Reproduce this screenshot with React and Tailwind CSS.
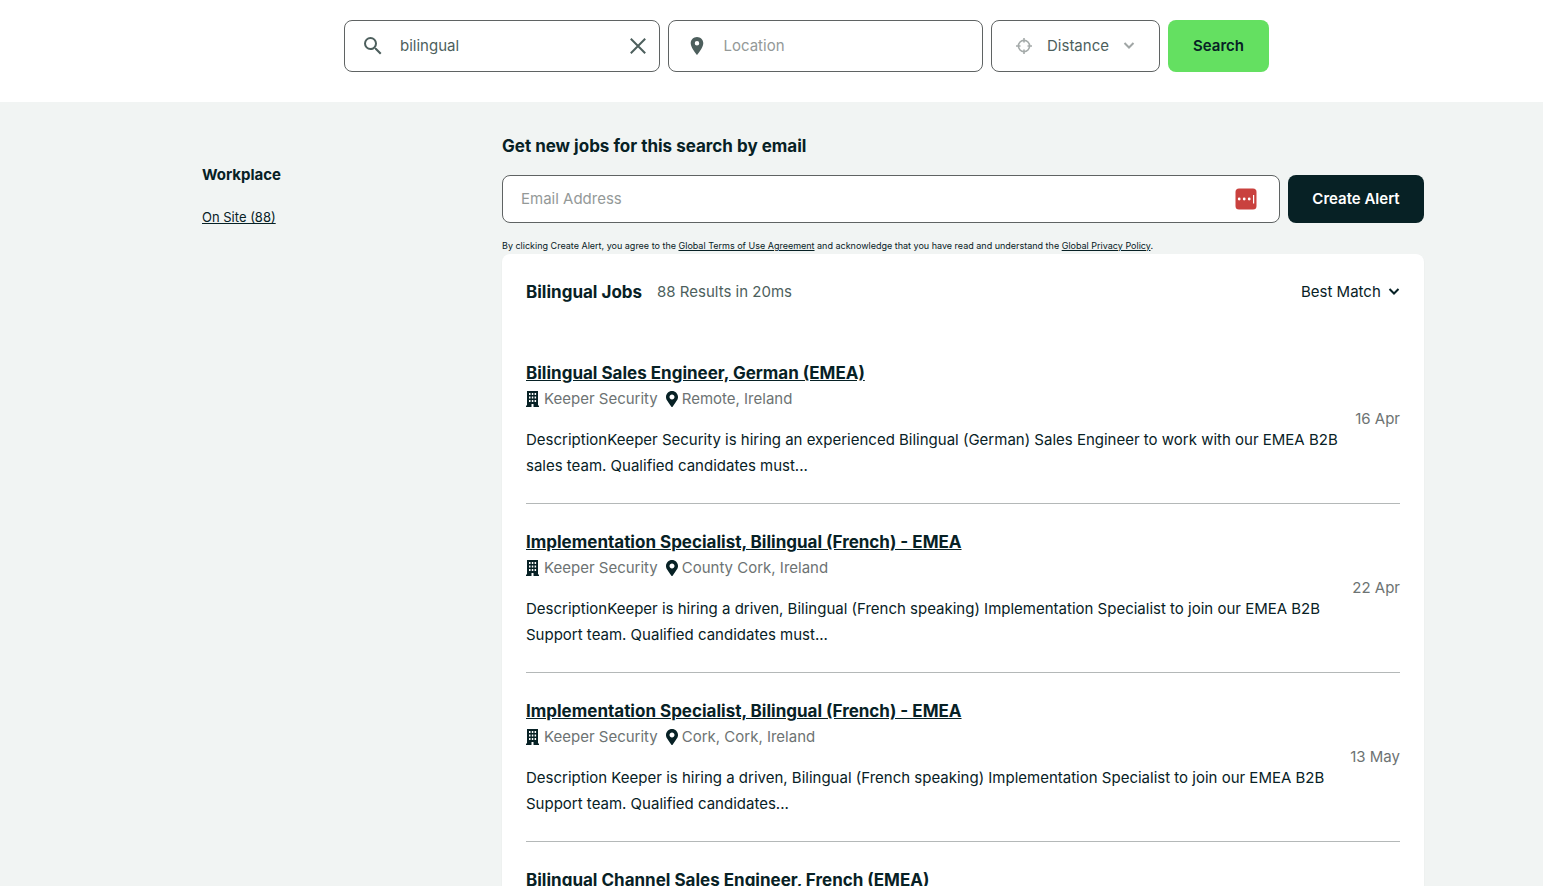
import React from "react";
import { MdSearch, MdPlace } from "react-icons/md";
import { FaMapMarkerAlt } from "react-icons/fa";

const jobs = [
  {
    title: "Bilingual Sales Engineer, German (EMEA)",
    company: "Keeper Security",
    location: "Remote, Ireland",
    date: "16 Apr",
    text: "DescriptionKeeper Security is hiring an experienced Bilingual (German) Sales Engineer to work with our EMEA B2B sales team. Qualified candidates must...",
  },
  {
    title: "Implementation Specialist, Bilingual (French) - EMEA",
    company: "Keeper Security",
    location: "County Cork, Ireland",
    date: "22 Apr",
    text: "DescriptionKeeper is hiring a driven, Bilingual (French speaking) Implementation Specialist to join our EMEA B2B Support team. Qualified candidates must...",
  },
  {
    title: "Implementation Specialist, Bilingual (French) - EMEA",
    company: "Keeper Security",
    location: "Cork, Cork, Ireland",
    date: "13 May",
    text: "Description Keeper is hiring a driven, Bilingual (French speaking) Implementation Specialist to join our EMEA B2B Support team. Qualified candidates...",
  },
];

const lastTitle = "Bilingual Channel Sales Engineer, French (EMEA)";

function Chevron({ className }) {
  return (
    <svg viewBox="0 0 12 12" className={className} fill="none" stroke="currentColor" strokeWidth="2" aria-hidden="true">
      <path d="M1.500 3 6 7.500 10.500 3" />
    </svg>
  );
}

function Crosshair() {
  return (
    <svg viewBox="0 0 16 16" className="size-4 shrink-0 text-[#a5abaa]" fill="none" stroke="currentColor" strokeWidth="1.600" aria-hidden="true">
      <circle cx="8" cy="8" r="5.600" />
      <path d="M8 0v4.500M8 11.500V16M0 8h4.500M11.500 8H16" />
    </svg>
  );
}

function Building() {
  return (
    <svg viewBox="0 0 14 16" className="h-4 w-[14px] shrink-0" aria-hidden="true">
      <path
        fill="currentColor"
        fillRule="evenodd"
        d="M1 0h11v14.500h1V16H7.500v-3h-2v3H0v-1.500h1ZM3 2v2h1.500V2Zm2.800 0v2h1.500V2Zm2.800 0v2h1.500V2ZM3 5.500v2h1.500v-2Zm2.800 0v2h1.500v-2Zm2.800 0v2h1.500v-2ZM3 9v2h1.500V9Zm2.800 0v2h1.500V9Zm2.800 0v2h1.500V9Z"
      />
    </svg>
  );
}

function SearchBar() {
  return (
    <header className="bg-white pt-5 pb-[30px] pl-[70px]">
      <form className="mx-auto flex h-[52px] max-w-[925px] gap-2" onSubmit={(e) => e.preventDefault()}>
        <div className="flex min-w-0 flex-1 items-center rounded-lg border border-[#5f6363] pr-3 pl-4">
          <MdSearch className="size-6 shrink-0 text-[#4d5f5d]" />
          <input aria-label="Keywords" defaultValue="bilingual" className="ml-[15px] min-w-0 flex-1 text-[#4d5f5d] outline-none" />
          <button type="button" aria-label="Clear keywords" className="text-[#4d5f5d]">
            <svg viewBox="0 0 18 18" className="size-[18px]" fill="none" stroke="currentColor" strokeWidth="2" aria-hidden="true">
              <path d="M1.800 1.800 16.200 16.200M16.200 1.800 1.800 16.200" />
            </svg>
          </button>
        </div>
        <div className="flex min-w-0 flex-1 items-center rounded-lg border border-[#5f6363] pr-3 pl-4">
          <MdPlace className="size-6 shrink-0 scale-90 text-[#4d5f5d]" />
          <input aria-label="Location" placeholder="Location" className="ml-[15px] min-w-0 flex-1 outline-none placeholder:text-[#949998]" />
        </div>
        <div className="flex w-[169px] items-center rounded-lg border border-[#5f6363] px-6">
          <Crosshair />
          <select aria-label="Distance" className="ml-[15px] min-w-0 flex-1 appearance-none bg-transparent text-[#4d5f5d] outline-none">
            <option>Distance</option>
          </select>
          <Chevron className="size-3 shrink-0 text-[#a0a6a5]" />
        </div>
        <button type="submit" className="w-[101px] rounded-lg bg-[#64e061] font-semibold text-[#072125]">
          Search
        </button>
      </form>
    </header>
  );
}

function AlertForm() {
  return (
    <form onSubmit={(e) => e.preventDefault()}>
      <h2 className="text-[17px] leading-7 font-bold">
        <label htmlFor="alert-email">Get new jobs for this search by email</label>
      </h2>
      <div className="mt-[15px] flex h-12 gap-2">
        <div className="flex min-w-0 flex-1 items-center rounded-lg border border-[#5f6363] bg-white pr-[22px] pl-[18px]">
          <input id="alert-email" type="email" placeholder="Email Address" className="min-w-0 flex-1 outline-none placeholder:text-[#949998]" />
          <svg viewBox="0 0 22 22" className="size-[22px] shrink-0" aria-hidden="true">
            <rect x="0.500" y="0.500" width="21" height="21" rx="3.500" fill="#c9413e" />
            <circle cx="4.200" cy="11" r="1.400" fill="#fff" />
            <circle cx="9.200" cy="11" r="1.400" fill="#fff" />
            <circle cx="14.200" cy="11" r="1.400" fill="#fff" />
            <rect x="18" y="7" width="1.200" height="8.500" fill="#fff" />
          </svg>
        </div>
        <button type="submit" className="w-[136px] rounded-lg bg-[#072125] font-semibold text-white">
          Create Alert
        </button>
      </div>
      <p className="pt-[15px] text-[9px] leading-4">
        By clicking Create Alert, you agree to the{" "}
        <a href="#terms" className="underline">Global Terms of Use Agreement</a> and acknowledge that you have read and
        understand the <a href="#privacy" className="underline">Global Privacy Policy</a>.
      </p>
    </form>
  );
}

function JobTitle({ children }) {
  return (
    <h3 className="text-[17px] leading-7 font-bold">
      <a href="#job" className="underline">{children}</a>
    </h3>
  );
}

function Job({ job }) {
  return (
    <li className="flex items-center justify-between gap-4 border-b border-[#b4b8b8] py-6">
      <div className="min-w-0">
        <JobTitle>{job.title}</JobTitle>
        <div className="flex items-center gap-2 leading-6 text-[#6d7373]">
          <span className="flex items-center gap-1">
            <span className="text-[#072125]"><Building /></span>
            {job.company}
          </span>
          <span className="flex items-center gap-1">
            <FaMapMarkerAlt className="h-4 w-3 text-[#072125]" />
            {job.location}
          </span>
        </div>
        <p className="mt-4 leading-[26px]">{job.text}</p>
      </div>
      <time className="shrink-0 text-[#6d7373]">{job.date}</time>
    </li>
  );
}

export default function App() {
  return (
    <div className="h-screen overflow-hidden bg-[#f1f4f3] font-['Inter',sans-serif] text-[15px] text-[#072125]">
      <SearchBar />
      <main className="pt-[30px] pl-[83px]">
        <div className="mx-auto flex max-w-[1222px]">
          <aside className="w-[300px] shrink-0 pt-[31px]">
            <h2 className="leading-6 font-bold">Workplace</h2>
            <a href="#on-site" className="mt-5 inline-block text-[13px] leading-5 underline">On Site (88)</a>
          </aside>
          <div className="min-w-0 flex-1">
            <AlertForm />
            <section className="rounded-lg bg-white p-6 shadow-xs">
              <div className="flex items-center">
                <h1 className="text-[17px] leading-7 font-bold">Bilingual Jobs</h1>
                <span className="ml-[15px] text-[#4d5f5d]">88 Results in 20ms</span>
                <div className="ml-auto flex items-center gap-[7px]">
                  <select aria-label="Sort by" className="appearance-none bg-transparent outline-none">
                    <option>Best Match</option>
                  </select>
                  <Chevron className="size-3" />
                </div>
              </div>
              <ul className="mt-[29px]">
                {jobs.map((job, i) => (
                  <Job key={i} job={job} />
                ))}
                <li className="pt-6">
                  <JobTitle>{lastTitle}</JobTitle>
                </li>
              </ul>
            </section>
          </div>
        </div>
      </main>
    </div>
  );
}
